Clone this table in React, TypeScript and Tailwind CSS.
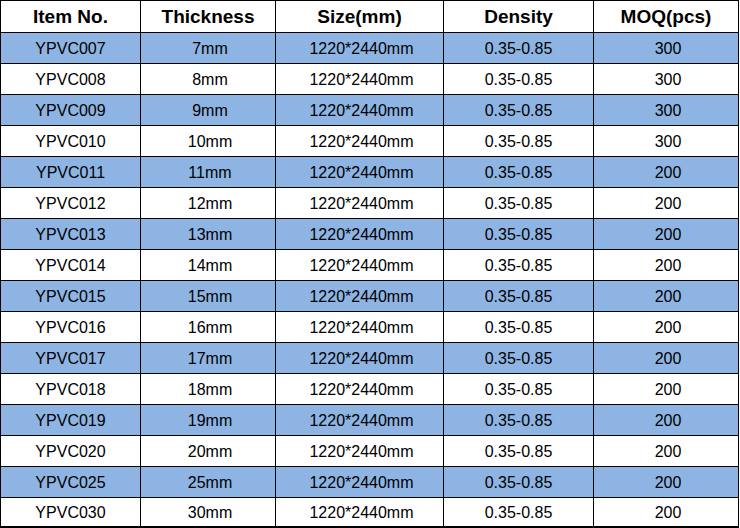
const rows = [
  ['YPVC007', '7mm', '300'],
  ['YPVC008', '8mm', '300'],
  ['YPVC009', '9mm', '300'],
  ['YPVC010', '10mm', '300'],
  ['YPVC011', '11mm', '200'],
  ['YPVC012', '12mm', '200'],
  ['YPVC013', '13mm', '200'],
  ['YPVC014', '14mm', '200'],
  ['YPVC015', '15mm', '200'],
  ['YPVC016', '16mm', '200'],
  ['YPVC017', '17mm', '200'],
  ['YPVC018', '18mm', '200'],
  ['YPVC019', '19mm', '200'],
  ['YPVC020', '20mm', '200'],
  ['YPVC025', '25mm', '200'],
  ['YPVC030', '30mm', '200'],
];

const cols = 'grid grid-cols-[140px_135px_168px_150px_145px]';
const cell = 'flex items-center justify-center border-r border-b border-black pt-[2px]';

export default function App() {
  return (
    <div className="w-[740px] h-[528px] bg-white overflow-hidden font-['Liberation_Sans',Arial,sans-serif] text-black">
      <div className="w-[739px] border-l border-t border-black">
        <div className={`${cols} h-[32px] text-[19px] font-bold`}>
          <div className={cell}>Item No.</div>
          <div className={cell}>Thickness</div>
          <div className={cell}>Size(mm)</div>
          <div className={cell}>Density</div>
          <div className={cell}>MOQ(pcs)</div>
        </div>
        {rows.map(([item, thick, moq], i) => {
          const last = i === rows.length - 1;
          return (
            <div
              key={item}
              className={`${cols} text-[16px] ${i % 2 === 0 ? 'bg-[#8db4e2]' : 'bg-white'} ${last ? 'h-[30px] [&>div]:border-b-2' : 'h-[31px]'}`}
            >
              <div className={cell}>{item}</div>
              <div className={`${cell} pl-1`}>{thick}</div>
              <div className={`${cell} pl-1`}>1220*2440mm</div>
              <div className={cell}>0.35-0.85</div>
              <div className={`${cell} pl-1`}>{moq}</div>
            </div>
          );
        })}
      </div>
    </div>
  );
}
